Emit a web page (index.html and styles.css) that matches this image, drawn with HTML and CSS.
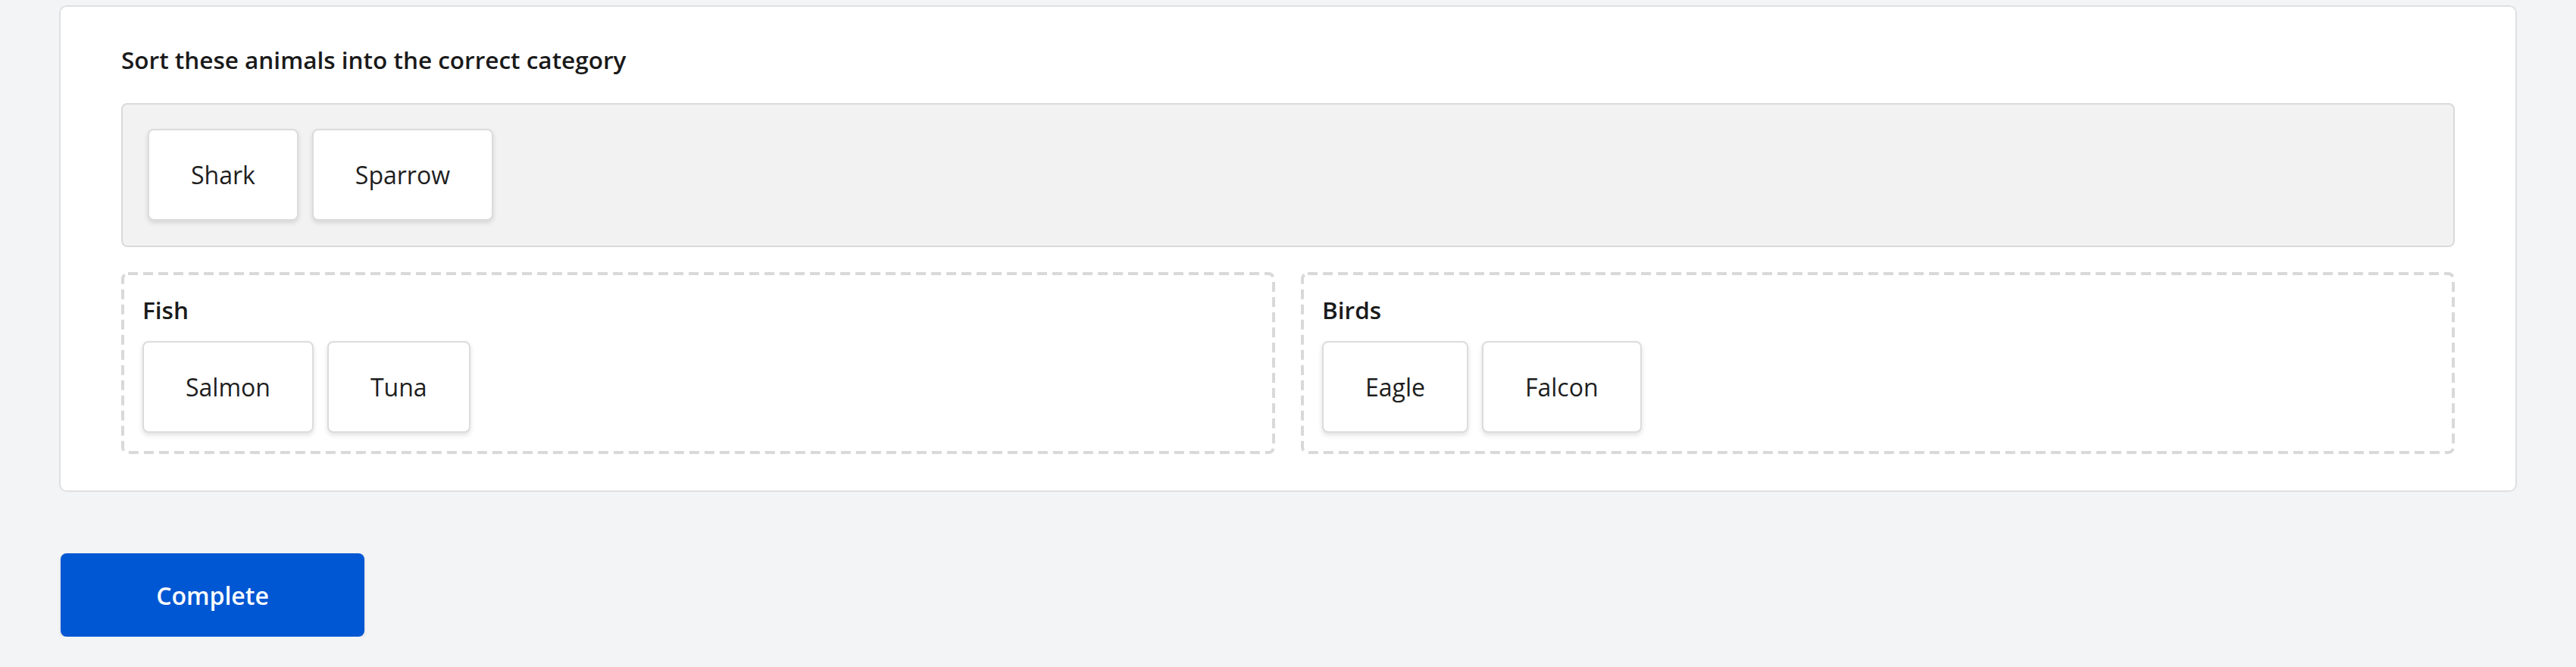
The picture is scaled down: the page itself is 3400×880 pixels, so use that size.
FILE: index.html
```html
<!DOCTYPE html>
<html lang="en">
<head>
<meta charset="utf-8">
<title>Sort animals</title>
<link rel="stylesheet" href="styles.css">
</head>
<body>
<main class="page">
  <section class="card">
    <h2 class="prompt">Sort these animals into the correct category</h2>
    <div class="pool">
      <div class="chip">Shark</div>
      <div class="chip">Sparrow</div>
    </div>
    <div class="categories">
      <div class="bucket">
        <svg class="bucket-frame" aria-hidden="true"><rect rx="7" ry="7"/></svg>
        <div class="bucket-title">Fish</div>
        <div class="bucket-items">
          <div class="chip">Salmon</div>
          <div class="chip">Tuna</div>
        </div>
      </div>
      <div class="bucket">
        <svg class="bucket-frame" aria-hidden="true"><rect rx="7" ry="7"/></svg>
        <div class="bucket-title">Birds</div>
        <div class="bucket-items">
          <div class="chip">Eagle</div>
          <div class="chip">Falcon</div>
        </div>
      </div>
    </div>
  </section>
  <button class="complete" type="button">Complete</button>
</main>
</body>
</html>
```
FILE: styles.css
```css
html, body {
  margin: 0;
  padding: 0;
  background: #f3f4f6;
  font-family: "Open Sans", "Noto Sans", sans-serif;
  color: #1c1c1c;
}

.page {
  padding: 7px 78px 0 78px;
  display: flex;
  flex-direction: column;
  align-items: flex-start;
}

.card {
  align-self: stretch;
  background: #ffffff;
  border: 2px solid #e0e0e0;
  border-radius: 10px;
  padding: 47px 80px 48px 80px;
}

.prompt {
  margin: 0 0 34px 0;
  font-size: 31.5px;
  font-weight: 600;
  line-height: 46px;
  color: #1a1a1a;
}

.pool {
  display: flex;
  gap: 18px;
  background: #f2f2f2;
  border: 2px solid #dadada;
  border-radius: 8px;
  padding: 32px 33px 33px 33px;
}

.chip {
  background: #ffffff;
  border: 2px solid #dcdcdc;
  border-radius: 8px;
  box-shadow: 0 3px 6px rgba(0, 0, 0, 0.12);
  padding: 34.5px 55px;
  font-size: 32px;
  line-height: 48px;
  color: #1e1e1e;
  white-space: nowrap;
}

.categories {
  margin-top: 33px;
  display: grid;
  grid-template-columns: 1fr 1fr;
  gap: 34px;
}

.bucket {
  position: relative;
  padding: 27px 28px 28px 28px;
}

.bucket-frame {
  position: absolute;
  left: 0;
  top: 0;
  width: 100%;
  height: 100%;
  pointer-events: none;
}

.bucket-frame rect {
  x: 2px;
  y: 2px;
  width: calc(100% - 4px);
  height: calc(100% - 4px);
  fill: none;
  stroke: #d9d9d9;
  stroke-width: 4;
  stroke-dasharray: 13 7;
}

.bucket-title {
  position: relative;
  font-size: 31.5px;
  font-weight: 600;
  line-height: 46px;
  color: #1a1a1a;
}

.bucket-items {
  position: relative;
  margin-top: 18px;
  display: flex;
  gap: 18px;
}

.complete {
  margin: 81px 0 0 2px;
  width: 401px;
  height: 110px;
  border: none;
  border-radius: 8px;
  background: #0057d3;
  box-shadow: 0 2px 4px rgba(0, 0, 0, 0.12);
  color: #ffffff;
  font-family: "Open Sans", "Noto Sans", sans-serif;
  font-size: 32px;
  font-weight: 600;
  cursor: pointer;
}
```
